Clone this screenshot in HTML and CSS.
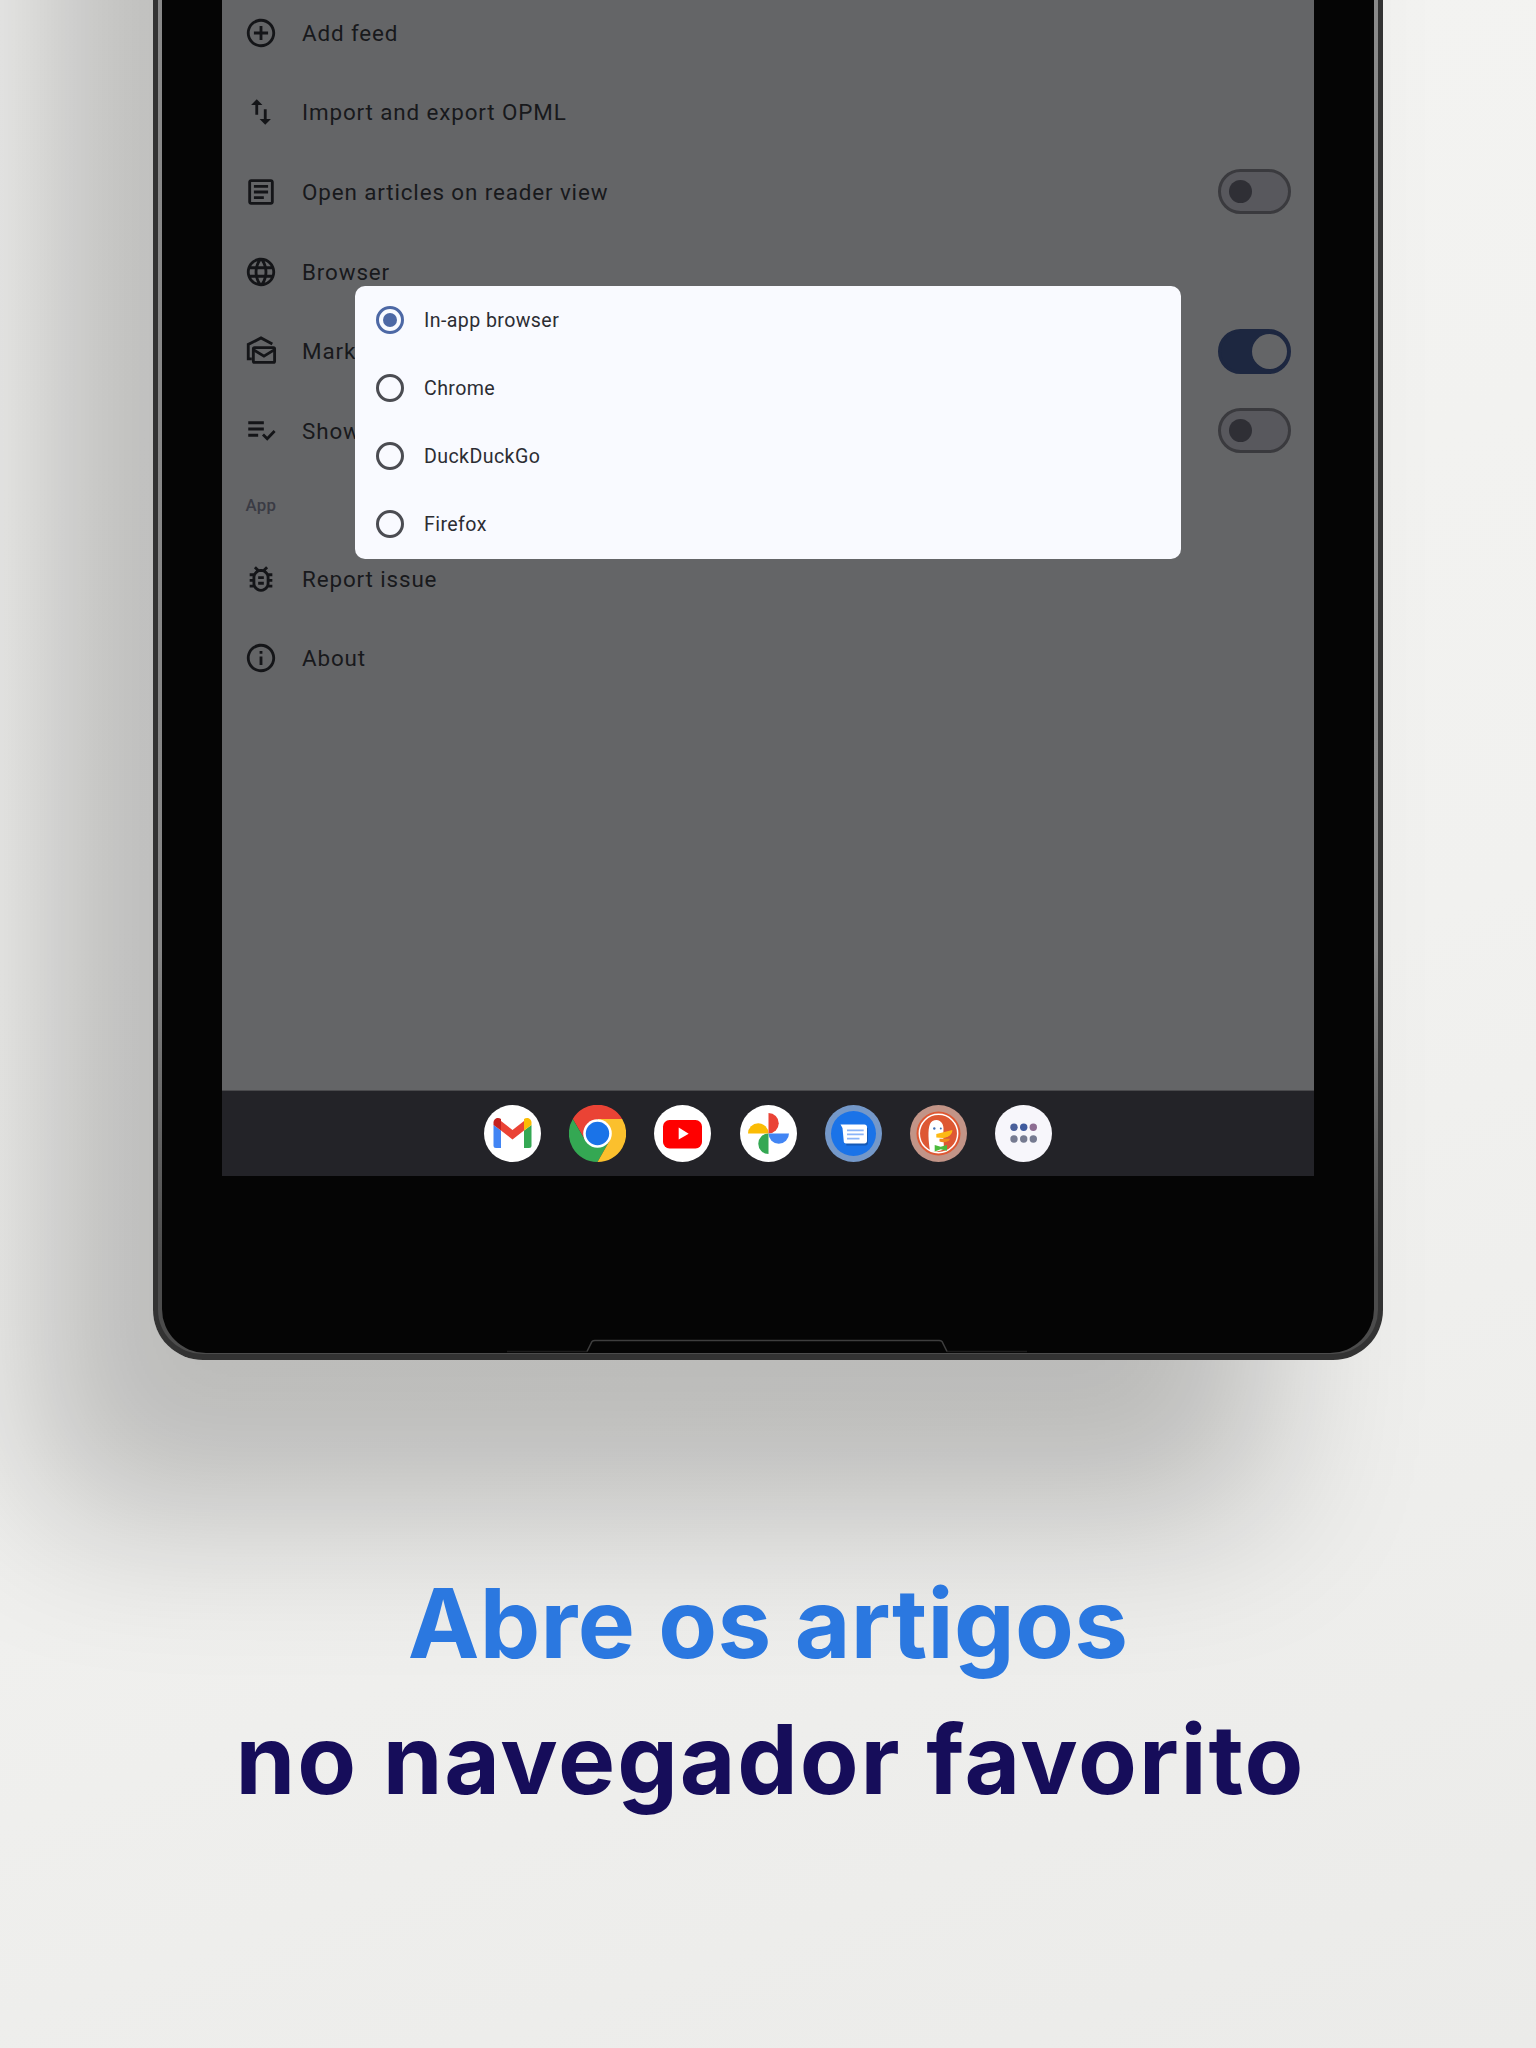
FILE: index.html
```html
<!DOCTYPE html>
<html lang="pt">
<head>
<meta charset="utf-8">
<title>Abre os artigos no navegador favorito</title>
<link rel="stylesheet" href="styles.css">
</head>
<body>
<main class="page">
  <section class="device">
    <div class="bezel">
      <div class="screen">
        <div class="list">
          <div class="row">
            <svg class="icon" viewBox="0 0 24 24"><path d="M13 7h-2v4H7v2h4v4h2v-4h4v-2h-4V7zm-1-5C6.48 2 2 6.48 2 12s4.48 10 10 10 10-4.48 10-10S17.52 2 12 2zm0 18c-4.41 0-8-3.59-8-8s3.59-8 8-8 8 3.59 8 8-3.59 8-8 8z"/></svg>
            <span class="label">Add feed</span>
          </div>
          <div class="row">
            <svg class="icon" viewBox="0 0 24 24"><path d="M9 3L5 6.99h3V14h2V6.99h3L9 3zm7 14.01V10h-2v7.01h-3L15 21l4-3.99h-3z"/></svg>
            <span class="label">Import and export OPML</span>
          </div>
          <div class="row">
            <svg class="icon" viewBox="0 0 24 24"><path d="M19 5v14H5V5h14m0-2H5c-1.1 0-2 .9-2 2v14c0 1.1.9 2 2 2h14c1.1 0 2-.9 2-2V5c0-1.1-.9-2-2-2zM14 17H7v-2h7v2zm3-4H7v-2h10v2zm0-4H7V7h10v2z"/></svg>
            <span class="label">Open articles on reader view</span>
            <span class="toggle"><span class="knob"></span></span>
          </div>
          <div class="row">
            <svg class="icon" viewBox="0 0 24 24"><path d="M11.99 2C6.47 2 2 6.48 2 12s4.47 10 9.99 10C17.52 22 22 17.52 22 12S17.52 2 11.99 2zm6.93 6h-2.95c-.32-1.25-.78-2.45-1.38-3.56 1.84.63 3.37 1.91 4.33 3.56zM12 4.04c.83 1.2 1.48 2.53 1.91 3.96h-3.82c.43-1.43 1.08-2.76 1.91-3.96zM4.26 14C4.1 13.36 4 12.69 4 12s.1-1.36.26-2h3.38c-.08.66-.14 1.32-.14 2 0 .68.06 1.34.14 2H4.26zm.82 2h2.95c.32 1.25.78 2.45 1.38 3.56-1.84-.63-3.37-1.9-4.33-3.56zm2.95-8H5.08c.96-1.66 2.49-2.93 4.33-3.56C8.81 5.55 8.35 6.75 8.03 8zM12 19.96c-.83-1.2-1.48-2.53-1.91-3.96h3.82c-.43 1.43-1.08 2.76-1.91 3.96zM14.34 14H9.66c-.09-.66-.16-1.32-.16-2 0-.68.07-1.35.16-2h4.68c.09.65.16 1.32.16 2 0 .68-.07 1.34-.16 2zm.25 5.56c.6-1.11 1.06-2.31 1.38-3.56h2.95c-.96 1.65-2.49 2.93-4.33 3.56zM16.36 14c.08-.66.14-1.32.14-2 0-.68-.06-1.34-.14-2h3.38c.16.64.26 1.31.26 2s-.1 1.36-.26 2h-3.38z"/></svg>
            <span class="label">Browser</span>
          </div>
          <div class="row">
            <svg class="icon stroked" viewBox="0 0 24 24"><path d="M5.500 17.500H3V7.400l9-4.600 8 4.200"/><rect x="6.600" y="9.600" width="15" height="10.400" rx=".8"/><path d="M6.600 11l7.500 4.600 7.500-4.600"/></svg>
            <span class="label">Mark as read on scroll</span>
            <span class="toggle on"><span class="knob"></span></span>
          </div>
          <div class="row">
            <svg class="icon" viewBox="0 0 24 24"><path d="M3 5.200h11v2H3zM3 9.600h11v2H3zM3 14h7v2H3z"/><path class="tick" d="M13.400 14.400l3 3 5.200-5.400"/></svg>
            <span class="label">Show read articles</span>
            <span class="toggle"><span class="knob"></span></span>
          </div>
          <div class="group">App</div>
          <div class="row">
            <svg class="icon" viewBox="0 0 24 24"><path d="M20 8h-2.810c-.45-.78-1.070-1.450-1.820-1.960L17 4.410 15.590 3l-2.170 2.170C12.960 5.060 12.490 5 12 5s-.96.06-1.410.17L8.410 3 7 4.410l1.620 1.630C7.880 6.550 7.260 7.220 6.810 8H4v2h2.090c-.05.33-.09.66-.09 1v1H4v2h2v1c0 .34.04.67.09 1H4v2h2.810c1.040 1.790 2.970 3 5.190 3s4.150-1.210 5.190-3H20v-2h-2.090c.05-.33.09-.66.09-1v-1h2v-2h-2v-1c0-.34-.04-.67-.09-1H20V8zm-4 4v3c0 .22-.03.47-.07.7l-.1.65-.37.65c-.72 1.240-2.040 2-3.460 2s-2.740-.77-3.460-2l-.37-.64-.1-.65C8.030 15.470 8 15.220 8 15v-4c0-.22.03-.47.07-.7l.1-.65.37-.65c.3-.52.72-.97 1.210-1.310l.57-.39.74-.18c.31-.08.63-.12.94-.12.32 0 .63.04.95.12l.68.16.61.42c.5.34.91.78 1.210 1.310l.38.65.1.65c.04.22.07.47.07.69v1zm-6 2h4v2h-4zm0-4h4v2h-4z"/></svg>
            <span class="label">Report issue</span>
          </div>
          <div class="row">
            <svg class="icon" viewBox="0 0 24 24"><path d="M11 7h2v2h-2zm0 4h2v6h-2zm1-9C6.480 2 2 6.480 2 12s4.480 10 10 10 10-4.480 10-10S17.520 2 12 2zm0 18c-4.410 0-8-3.590-8-8s3.590-8 8-8 8 3.590 8 8-3.590 8-8 8z"/></svg>
            <span class="label">About</span>
          </div>
        </div>

        <div class="dock">
          <svg class="app" viewBox="0 0 57 57"><circle cx="28.500" cy="28.500" r="28.500" fill="#fff"/><path fill="#4285f4" d="M9.500 20l7.500 5.500V43h-5a2.500 2.500 0 0 1-2.500-2.500z"/><path fill="#34a853" d="M47.500 20L40 25.500V43h5a2.500 2.500 0 0 0 2.500-2.500z"/><path fill="#ea4335" d="M17 16l11.500 9L40 16v9.500l-11.500 9-11.500-9z"/><path fill="#c5221f" d="M9.500 20v-2.500c0-4 4.500-6 7.500-3.500v11.500z"/><path fill="#fbbc04" d="M47.500 20v-2.500c0-4-4.500-6-7.500-3.500v11.500z"/></svg>
          <svg class="app" viewBox="0 0 57 57"><path fill="#ea4335" d="M3.800 14A28.500 28.500 0 0 1 53.200 14H28.500L16 35z"/><path fill="#34a853" d="M3.800 14A28.500 28.500 0 0 0 28.500 57L41 35H16z"/><path fill="#fbc02d" d="M28.500 57A28.500 28.500 0 0 0 53.200 14H28.500L41 35z"/><circle cx="28.500" cy="28.500" r="14.300" fill="#fff"/><circle cx="28.500" cy="28.500" r="11.700" fill="#1a73e8"/></svg>
          <svg class="app" viewBox="0 0 57 57"><circle cx="28.500" cy="28.500" r="28.500" fill="#fff"/><rect x="9" y="15" width="39" height="28.500" rx="6.500" fill="#f00"/><path fill="#fff" d="M24.700 22.500L34.700 28.700 24.700 34.500z"/></svg>
          <svg class="app" viewBox="0 0 57 57"><circle cx="28.500" cy="28.500" r="28.500" fill="#fff"/><path fill="#fbbc04" d="M8 28.500A10.250 10.250 0 0 1 28.500 28.500z"/><path fill="#ea4335" d="M28.500 8A10.250 10.250 0 0 1 28.500 28.500z"/><path fill="#4285f4" d="M49 28.500A10.250 10.250 0 0 1 28.500 28.500z"/><path fill="#34a853" d="M28.500 49A10.250 10.250 0 0 1 28.500 28.500z"/></svg>
          <svg class="app" viewBox="0 0 57 57"><circle cx="28.500" cy="28.500" r="28.500" fill="#7498c9"/><circle cx="28.500" cy="28.500" r="22.500" fill="#1a73e8"/><path fill="#1559b5" d="M18 23h25v15c0 1.500-1 2.500-2.500 2.500H21.500z"/><path fill="#fff" d="M15.500 19.500H39.500c1.500 0 2.500 1 2.500 2.500v14c0 1.500-1 2.500-2.500 2.500H21c-1.200 0-2-.6-2.200-1.700L17.500 23z"/><path fill="#8ab4f8" d="M22 24.400h16.700v1.900H22zM22 28.400h16.700v1.900H22zM22 32.700h12.500v1.900H22z"/></svg>
          <svg class="app" viewBox="0 0 57 57"><circle cx="28.500" cy="28.500" r="28.500" fill="#c29487"/><circle cx="28.500" cy="28.500" r="22" fill="#de5833"/><circle cx="28.500" cy="28.500" r="19.200" fill="none" stroke="#fff" stroke-width="1.500"/><path fill="#fff" d="M20 46c-1.500-10-2.500-21 0-27 2-4.500 9.500-6 12.500 0 1.500 3.500 1 6 .7 10-.2 4 1 9 .5 15-4 2.500-9.500 3.500-13.200 2z"/><circle cx="24.300" cy="23.500" r="1.200" fill="#3f6fb5"/><circle cx="30.800" cy="23.500" r="1" fill="#3f6fb5"/><path fill="#fdb913" d="M26.300 29L42.300 25c.4 3.500-3.500 7.500-9.500 8l-6.500-.5z"/><path fill="#f08a1d" d="M29.500 33.800H40c-.8 3-6 4.200-10.500 2.800z"/><path fill="#4cba3c" d="M24.700 40l6 1.800 6.300-1.800v5.800l-6.300-1.500-6 2.200z"/></svg>
          <svg class="app" viewBox="0 0 57 57"><circle cx="28.500" cy="28.500" r="28.500" fill="#f7f6fb"/><circle cx="19" cy="22.300" r="3.700" fill="#4a5f9a"/><circle cx="28.700" cy="22.300" r="3.700" fill="#3f5a9e"/><circle cx="38.300" cy="22.300" r="3.700" fill="#8d6d92"/><circle cx="19" cy="34" r="3.700" fill="#757a90"/><circle cx="28.700" cy="34" r="3.700" fill="#757a90"/><circle cx="38.300" cy="34" r="3.700" fill="#757a90"/></svg>
        </div>

        <div class="dialog">
          <div class="option"><span class="radio checked"></span><span>In-app browser</span></div>
          <div class="option"><span class="radio"></span><span>Chrome</span></div>
          <div class="option"><span class="radio"></span><span>DuckDuckGo</span></div>
          <div class="option"><span class="radio"></span><span>Firefox</span></div>
        </div>
      </div>
      <svg class="notch" viewBox="0 0 520 14"><path class="notch-side" d="M0 12.500H80M440 12.500H520"/><path d="M80 12.500L85 2.500Q86 1.500 88 1.500H432Q434 1.500 435 2.500L440 12.500"/></svg>
    </div>
  </section>

  <h1 class="headline">
    <span class="accent">Abre os artigos</span>
    <span class="navy">no navegador favorito</span>
  </h1>
</main>
</body>
</html>
```

FILE: styles.css
```css
* { box-sizing: border-box; }

html, body { margin: 0; padding: 0; }

.page {
  width: 1536px;
  height: 2048px;
  overflow: hidden;
  background: linear-gradient(160deg, #f4f4f2 0%, #f1f1ef 55%, #ebebe9 100%);
  display: flex;
  flex-direction: column;
  align-items: center;
}

/* The tablet runs off the top of the picture, so its frame starts above the page */
.device {
  width: 1230px;
  height: 1760px;
  margin-top: -400px;
  flex: none;
  border: 5px solid #333;
  border-top: 0;
  border-bottom-width: 6.500px;
  border-radius: 0 0 50px 50px;
  padding: 0 4px 1.500px;
  background: linear-gradient(#8b8b8b 0, #868686 77%, #4c4c4c 94.600%);
  box-shadow: -118px 155px 160px rgba(0, 0, 0, .225);
}

.bezel {
  position: relative;
  height: 100%;
  background: #050505;
  border-radius: 0 0 44px 44px;
  padding: 400px 60px 176.500px;
}

.screen {
  position: relative;
  height: 100%;
  background: #646567;
  display: flex;
  flex-direction: column;
  font-family: Roboto, "Liberation Sans", sans-serif;
  overflow: hidden;
}

.list {
  flex: 1;
  margin-top: -7.300px;
}

.row {
  height: 79.700px;
  display: flex;
  align-items: center;
  padding: 0 23px 0 22px;
  gap: 24px;
}

.icon {
  width: 34px;
  height: 34px;
  flex: none;
  fill: #141518;
}

.icon .tick {
  fill: none;
  stroke: #141518;
  stroke-width: 2;
}

.icon.stroked {
  fill: none;
  stroke: #141518;
  stroke-width: 2;
}

.label {
  font-size: 22.400px;
  letter-spacing: .88px;
  color: #18191c;
}

.group {
  height: 68px;
  display: flex;
  align-items: center;
  padding-left: 23.500px;
  font-size: 16.800px;
  letter-spacing: .3px;
  font-weight: 500;
  color: #3a3b44;
}

.toggle {
  margin-left: auto;
  width: 73px;
  height: 45px;
  border: 3px solid #3a3a3e;
  border-radius: 23px;
  background: #58585d;
  display: flex;
  align-items: center;
  padding-left: 8px;
}

.knob {
  width: 23px;
  height: 23px;
  border-radius: 50%;
  background: #2f2f35;
}

.toggle.on {
  border-color: #1d2740;
  background: #1d2740;
  padding-left: 31px;
}

.toggle.on .knob {
  width: 35px;
  height: 35px;
  background: #646567;
}

.dock {
  height: 86px;
  flex: none;
  background: #232328;
  border-top: 1px solid #4a4a4d;
  display: flex;
  justify-content: center;
  align-items: center;
  gap: 28.300px;
}

.app {
  width: 57px;
  height: 57px;
  flex: none;
}

.dialog {
  position: absolute;
  left: 133px;
  top: 286px;
  width: 825.500px;
  height: 273px;
  background: #f9faff;
  border-radius: 10px;
  font-size: 19.600px;
  letter-spacing: .4px;
  color: #2c2d33;
}

.option {
  height: 68px;
  display: flex;
  align-items: center;
  gap: 20px;
  padding-left: 21px;
}

.radio {
  width: 28px;
  height: 28px;
  flex: none;
  border: 3px solid #4b4c52;
  border-radius: 50%;
  display: flex;
  align-items: center;
  justify-content: center;
}

.radio.checked { border-color: #4d68a5; }

.radio.checked::after {
  content: "";
  width: 14px;
  height: 14px;
  border-radius: 50%;
  background: #4d68a5;
}

.notch {
  position: absolute;
  left: 345px;
  bottom: 0;
  width: 520px;
  height: 14px;
  fill: none;
  stroke: #3e3e3e;
  stroke-width: 1.500;
}

.notch-side { stroke: #1c1c1c; }

.headline {
  margin: 195px 0 0;
  font-family: Inter, "Open Sans", sans-serif;
  font-size: 96px;
  font-weight: 700;
  line-height: 136px;
  text-align: center;
}

.headline span { display: block; white-space: nowrap; }

.accent { color: #2b78e0; letter-spacing: .35px; }

.navy { color: #160d5a; letter-spacing: 1.900px; padding-left: 5px; }
```
